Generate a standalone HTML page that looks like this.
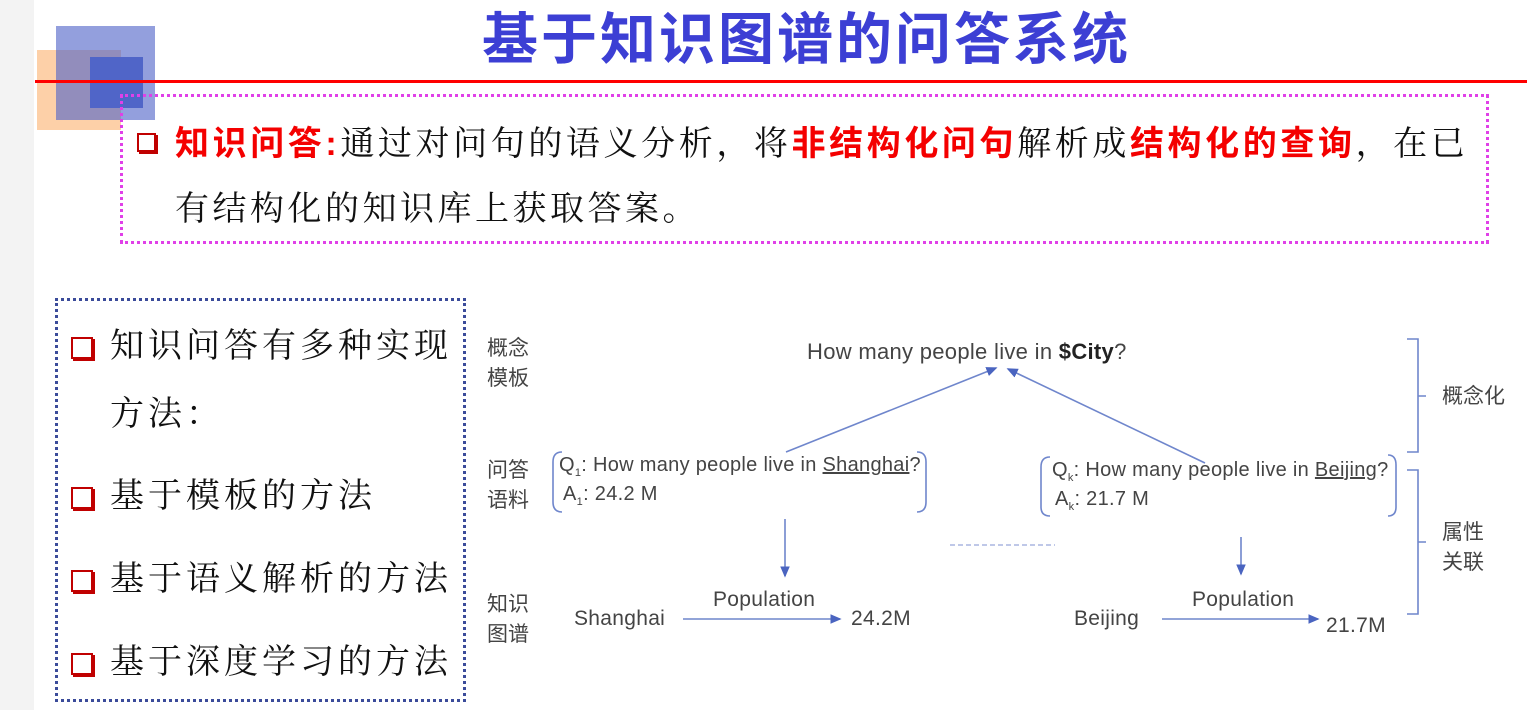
<!DOCTYPE html>
<html><head><meta charset="utf-8">
<style>
body{margin:0;width:1527px;height:710px;background:#fff;position:relative;overflow:hidden;font-family:"Liberation Sans","Noto Sans CJK SC",sans-serif}
.a{position:absolute;white-space:nowrap}
.serif{font-family:"Liberation Serif","Noto Serif CJK SC",serif;color:#111}
.red{font-family:"Liberation Sans","Noto Sans CJK SC",sans-serif;font-weight:bold;color:#f40000}
.cb{position:absolute;width:18px;height:18px;border:2px solid #c00000;box-shadow:2px 2px 0 #c00000;background:#fff}
.d{font-size:21px;color:#444;letter-spacing:0.3px}
.lab{font-size:21px;color:#444;line-height:30px}
</style></head><body>
<div class="a" style="left:0;top:0;width:34px;height:710px;background:#f3f3f3"></div>
<div class="a" style="left:37px;top:50px;width:84px;height:80px;background:#fdd0a8"></div>
<div class="a" style="left:56px;top:26px;width:99px;height:94px;background:rgba(80,100,200,0.62)"></div>
<div class="a" style="left:90px;top:57px;width:53px;height:51px;background:#5065c8"></div>
<div class="a" style="left:35px;top:80px;width:1492px;height:3px;background:#f00"></div>
<div class="a" style="left:482px;top:5px;font-size:56px;font-weight:bold;color:#3c3fd4;letter-spacing:3px;line-height:70px">基于知识图谱的问答系统</div>

<div class="a" style="left:120px;top:94px;width:1363px;height:144px;border:3px dotted #e040e8"></div>
<div class="cb" style="left:137px;top:133px;width:15px;height:15px"></div>
<div class="a" style="left:175px;top:122px;font-size:34px;line-height:44px;letter-spacing:3.6px"><span class="red">知识问答:</span><span class="serif">通过对问句的语义分析，将</span><span class="red">非结构化问句</span><span class="serif">解析成</span><span class="red">结构化的查询</span><span class="serif">，在已</span></div>
<div class="a serif" style="left:175px;top:188px;font-size:34px;line-height:44px;letter-spacing:3.5px">有结构化的知识库上获取答案。</div>

<div class="a" style="left:55px;top:298px;width:405px;height:398px;border:3px dotted #3b4b9a"></div>
<div class="cb" style="left:71px;top:337px"></div>
<div class="a serif" style="left:110px;top:324px;font-size:34px;line-height:46px;letter-spacing:4px">知识问答有多种实现</div>
<div class="a serif" style="left:110px;top:392px;font-size:34px;line-height:46px;letter-spacing:4px">方法：</div>
<div class="cb" style="left:71px;top:487px"></div>
<div class="a serif" style="left:110px;top:474px;font-size:34px;line-height:46px;letter-spacing:4px">基于模板的方法</div>
<div class="cb" style="left:71px;top:570px"></div>
<div class="a serif" style="left:110px;top:557px;font-size:34px;line-height:46px;letter-spacing:4px">基于语义解析的方法</div>
<div class="cb" style="left:71px;top:653px"></div>
<div class="a serif" style="left:110px;top:640px;font-size:34px;line-height:46px;letter-spacing:4px">基于深度学习的方法</div>

<div class="a lab" style="left:487px;top:334px">概念<br>模板</div>
<div class="a lab" style="left:487px;top:456px">问答<br>语料</div>
<div class="a lab" style="left:487px;top:590px">知识<br>图谱</div>
<div class="a lab" style="left:1442px;top:382px">概念化</div>
<div class="a lab" style="left:1442px;top:518px">属性<br>关联</div>

<div class="a d" style="left:807px;top:339px;font-size:22px">How many people live in <b style="color:#222">$City</b>?</div>
<div class="a d" style="left:559px;top:454px;font-size:20px">Q<sub style="font-size:11px">1</sub>: How many people live in <u>Shanghai</u>?</div>
<div class="a d" style="left:563px;top:483px;font-size:20px">A<sub style="font-size:11px">1</sub>: 24.2 M</div>
<div class="a d" style="left:1052px;top:459px;font-size:20px">Q<sub style="font-size:11px">k</sub>: How many people live in <u>Beijing</u>?</div>
<div class="a d" style="left:1055px;top:488px;font-size:20px">A<sub style="font-size:11px">k</sub>: 21.7 M</div>
<div class="a d" style="left:574px;top:607px">Shanghai</div>
<div class="a d" style="left:713px;top:588px">Population</div>
<div class="a d" style="left:851px;top:607px">24.2M</div>
<div class="a d" style="left:1074px;top:607px">Beijing</div>
<div class="a d" style="left:1192px;top:588px">Population</div>
<div class="a d" style="left:1326px;top:614px">21.7M</div>

<svg class="a" style="left:0;top:0" width="1527" height="710">
<defs><marker id="m" markerWidth="8" markerHeight="8" refX="6" refY="4" orient="auto"><path d="M0,1 L7,4 L0,7z" fill="#4a64c0"/></marker></defs>
<g stroke="#6f86cc" stroke-width="1.6" fill="none">
<path d="M786,452 L996,368" marker-end="url(#m)"/>
<path d="M1205,463 L1008,369" marker-end="url(#m)"/>
<path d="M785,519 L785,576" marker-end="url(#m)"/>
<path d="M1241,537 L1241,574" marker-end="url(#m)"/>
<path d="M683,619 L840,619" marker-end="url(#m)"/>
<path d="M1162,619 L1318,619" marker-end="url(#m)"/>
<path d="M950,545 L1055,545" stroke-dasharray="5,3" stroke="#aab6e0"/>
<path d="M562,452 Q553,452 553,462 L553,502 Q553,512 562,512"/>
<path d="M917,452 Q926,452 926,462 L926,502 Q926,512 917,512"/>
<path d="M1050,457 Q1041,457 1041,467 L1041,507 Q1041,516 1050,516"/>
<path d="M1388,455 Q1396,455 1396,465 L1396,507 Q1396,516 1388,516"/>
<path d="M1407,339 L1418,339 L1418,452 L1407,452 M1418,396 L1426,396"/>
<path d="M1407,470 L1418,470 L1418,614 L1407,614 M1418,542 L1426,542"/>
</g>
</svg>
</body></html>
